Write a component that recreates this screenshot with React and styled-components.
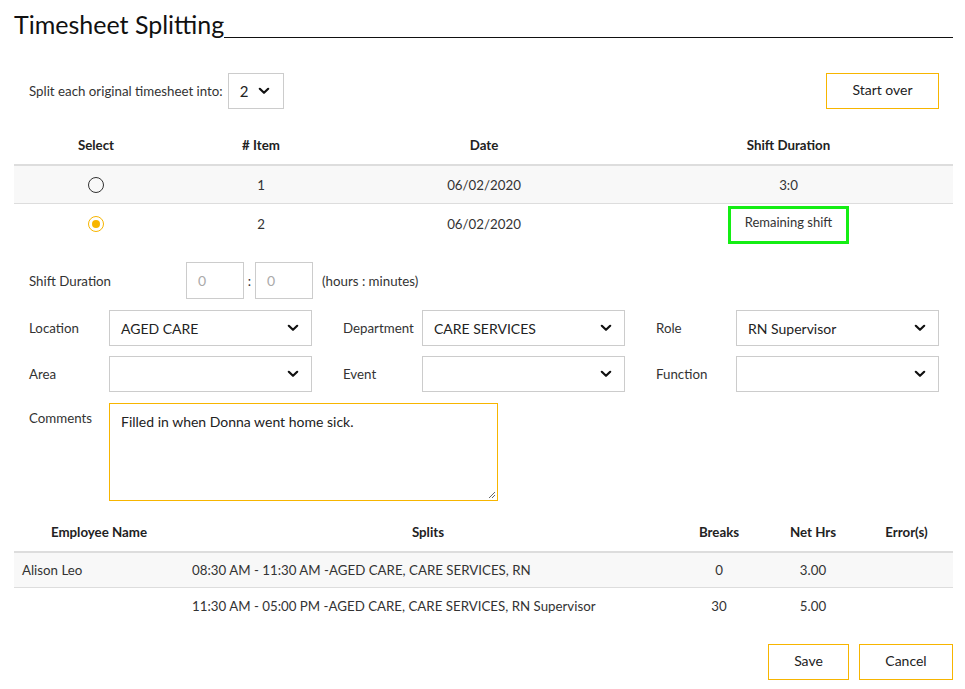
import React from "react";
import styled, { createGlobalStyle } from "styled-components";

const Global = createGlobalStyle`
  html, body { margin: 0; padding: 0; background: #fff; }
  body { font-family: Lato, "Open Sans", Arial, sans-serif; color: #333; font-size: 13.3px; }
  * { box-sizing: border-box; }
`;

const Page = styled.div`
  width: 965px;
  padding: 8px 12px 0 14px;
`;

const TitleRow = styled.div`
  display: flex;
  align-items: flex-end;
  height: 30px;
`;
const Title = styled.h1`
  margin: 0;
  font-size: 25px;
  font-weight: 400;
  color: #111;
  line-height: 28px;
  white-space: nowrap;
`;
const TitleRule = styled.div`
  flex: 1;
  border-bottom: 1px solid #111;
`;

const Toolbar = styled.div`
  display: flex;
  align-items: center;
  justify-content: space-between;
  margin-top: 35px;
  padding: 0 14px 0 15px;
`;
const ToolbarLeft = styled.div`
  display: flex;
  align-items: center;
  gap: 5px;
`;
const SmallSelect = styled.div`
  width: 56px;
  height: 36px;
  border: 1px solid #ccc;
  display: flex;
  align-items: center;
  padding-left: 11px;
  gap: 10px;
  font-size: 15px;
  color: #222;
`;
const OutlineButton = styled.button`
  height: 36px;
  width: ${(p) => p.$w}px;
  padding: 0 0 2px;
  border: 1px solid #f7b500;
  background: #fff;
  font-family: inherit;
  font-size: 14px;
  line-height: 1;
  color: #222;
  cursor: pointer;
`;

const Table = styled.div`
  margin-top: ${(p) => p.$mt}px;
`;
const Row = styled.div`
  display: grid;
  grid-template-columns: ${(p) => p.$cols};
  align-items: center;
  height: ${(p) => p.$h}px;
  background: ${(p) => (p.$shade ? "#f8f8f8" : "transparent")};
  border-bottom: ${(p) => p.$border || "none"};
`;
const HeadCell = styled.div`
  text-align: center;
  font-weight: 700;
  font-size: 13.3px;
  color: #222;
`;
const Cell = styled.div`
  padding: 0 8px;
  font-size: 13.3px;
  color: #333;
  display: flex;
  justify-content: ${(p) => (p.$align === "left" ? "flex-start" : "center")};
  align-items: center;
`;
const Radio = styled.span`
  width: 16px;
  height: 16px;
  border-radius: 50%;
  border: 1.5px solid ${(p) => (p.$on ? "#f7b500" : "#333")};
  display: inline-flex;
  align-items: center;
  justify-content: center;
  &::after {
    content: "";
    width: 8px;
    height: 8px;
    border-radius: 50%;
    background: ${(p) => (p.$on ? "#f7b500" : "transparent")};
  }
`;
const Highlight = styled.div`
  width: 121px;
  height: 38px;
  margin-top: 2px;
  border: 3px solid #14ee14;
  display: flex;
  justify-content: center;
  padding-top: 5px;
  font-size: 13px;
  color: #333;
`;

const Form = styled.div`
  margin-top: 22px;
  padding-left: 15px;
  width: 925px;
  display: flex;
  flex-direction: column;
  gap: 11px;
`;
const DurationRow = styled.div`
  display: flex;
  align-items: center;
  height: 37px;
`;
const Label = styled.div`
  width: ${(p) => p.$w || 80}px;
  flex-shrink: 0;
  font-size: 13.3px;
  color: #333;
  align-self: ${(p) => (p.$top ? "flex-start" : "center")};
  padding-top: ${(p) => (p.$top ? "7px" : "0")};
`;
const NumInput = styled.div`
  width: 58px;
  height: 37px;
  border: 1px solid #ccc;
  padding-left: 11px;
  display: flex;
  align-items: center;
  font-size: 14px;
  color: #aaa;
`;
const Colon = styled.span`
  width: 11px;
  text-align: center;
  color: #333;
`;
const Hint = styled.span`
  margin-left: 9px;
  color: #333;
`;
const FieldGroup = styled.div`
  display: grid;
  grid-template-columns: 80px 203px 31px 79px 203px 31px 80px 203px;
  row-gap: 10px;
  align-items: center;
`;
const Select = styled.div`
  height: 36px;
  border: 1px solid #ccc;
  display: flex;
  align-items: center;
  justify-content: space-between;
  padding: 0 12px 0 11px;
  font-size: 14px;
  color: #222;
`;
const Spacer = styled.div``;
const CommentsRow = styled.div`
  display: flex;
`;
const TextArea = styled.div`
  position: relative;
  width: 389px;
  height: 98px;
  border: 1px solid #f7b500;
  padding: 9px 11px;
  font-size: 14px;
  color: #222;
`;
const Grip = styled.svg`
  position: absolute;
  right: 1px;
  bottom: 1px;
`;

const Footer = styled.div`
  display: flex;
  justify-content: flex-end;
  gap: 10px;
  margin-top: 21px;
`;

const Chevron = () => (
  <svg width="12" height="8" viewBox="0 0 12 8">
    <path d="M1.8 1.8 L6 5.8 L10.2 1.8" fill="none" stroke="#111" strokeWidth="2.2" strokeLinecap="round" strokeLinejoin="round" />
  </svg>
);

const topCols = "164px 166px 280px 329px";
const botCols = "170px 488px 94px 94px 93px";

export default function App() {
  return (
    <>
      <Global />
      <Page>
        <TitleRow>
          <Title>Timesheet Splitting</Title>
          <TitleRule />
        </TitleRow>

        <Toolbar>
          <ToolbarLeft>
            <span>Split each original timesheet into:</span>
            <SmallSelect>
              2 <Chevron />
            </SmallSelect>
          </ToolbarLeft>
          <OutlineButton $w={113}>Start over</OutlineButton>
        </Toolbar>

        <Table $mt={17}>
          <Row $cols={topCols} $h={40} $border="2px solid #ddd">
            <HeadCell>Select</HeadCell>
            <HeadCell># Item</HeadCell>
            <HeadCell>Date</HeadCell>
            <HeadCell>Shift Duration</HeadCell>
          </Row>
          <Row $cols={topCols} $h={38} $shade $border="1px solid #ddd">
            <Cell><Radio /></Cell>
            <Cell>1</Cell>
            <Cell>06/02/2020</Cell>
            <Cell>3:0</Cell>
          </Row>
          <Row $cols={topCols} $h={36}>
            <Cell><Radio $on /></Cell>
            <Cell>2</Cell>
            <Cell>06/02/2020</Cell>
            <Cell><Highlight>Remaining shift</Highlight></Cell>
          </Row>
        </Table>

        <Form>
          <DurationRow>
            <Label $w={157}>Shift Duration</Label>
            <NumInput>0</NumInput>
            <Colon>:</Colon>
            <NumInput>0</NumInput>
            <Hint>(hours : minutes)</Hint>
          </DurationRow>
          <FieldGroup>
            <Label>Location</Label>
            <Select>AGED CARE <Chevron /></Select>
            <Spacer />
            <Label>Department</Label>
            <Select>CARE SERVICES <Chevron /></Select>
            <Spacer />
            <Label>Role</Label>
            <Select>RN Supervisor <Chevron /></Select>

            <Label>Area</Label>
            <Select><span /> <Chevron /></Select>
            <Spacer />
            <Label>Event</Label>
            <Select><span /> <Chevron /></Select>
            <Spacer />
            <Label>Function</Label>
            <Select><span /> <Chevron /></Select>
          </FieldGroup>
          <CommentsRow>
            <Label $top>Comments</Label>
            <TextArea>
              Filled in when Donna went home sick.
              <Grip width="10" height="10" viewBox="0 0 10 10">
                <path d="M9 3 L3 9 M9 6 L6 9" stroke="#666" strokeWidth="1" />
              </Grip>
            </TextArea>
          </CommentsRow>
        </Form>

        <Table $mt={11}>
          <Row $cols={botCols} $h={41} $border="2px solid #ddd">
            <HeadCell>Employee Name</HeadCell>
            <HeadCell>Splits</HeadCell>
            <HeadCell>Breaks</HeadCell>
            <HeadCell>Net Hrs</HeadCell>
            <HeadCell>Error(s)</HeadCell>
          </Row>
          <Row $cols={botCols} $h={35} $shade $border="1px solid #ddd">
            <Cell $align="left">Alison Leo</Cell>
            <Cell $align="left">08:30 AM - 11:30 AM -AGED CARE, CARE SERVICES, RN</Cell>
            <Cell>0</Cell>
            <Cell>3.00</Cell>
            <Cell />
          </Row>
          <Row $cols={botCols} $h={35}>
            <Cell $align="left" />
            <Cell $align="left">11:30 AM - 05:00 PM -AGED CARE, CARE SERVICES, RN Supervisor</Cell>
            <Cell>30</Cell>
            <Cell>5.00</Cell>
            <Cell />
          </Row>
        </Table>

        <Footer>
          <OutlineButton $w={81}>Save</OutlineButton>
          <OutlineButton $w={94}>Cancel</OutlineButton>
        </Footer>
      </Page>
    </>
  );
}
